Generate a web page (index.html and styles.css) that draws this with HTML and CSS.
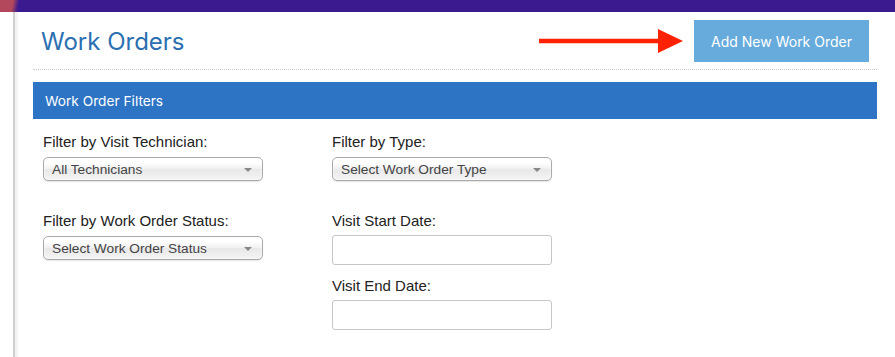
FILE: index.html
```html
<!DOCTYPE html>
<html lang="en">
<head>
  <meta charset="UTF-8" />
  <meta name="viewport" content="width=device-width, initial-scale=1.0"/>
  <title>Work Orders</title>
  <link rel="stylesheet" href="styles.css">
</head>
<body>
  <div class="topbar"></div>

  <div class="layout">
    <div class="sidebar"></div>

    <div class="main">
      <!-- Page header -->
      <div class="page-header">
        <h1 class="page-title">Work Orders</h1>
        <div class="header-actions">
          <svg class="arrow" width="145" height="26" viewBox="0 0 145 26">
            <line x1="0" y1="13" x2="121" y2="13" stroke="#ff2200" stroke-width="4.5"/>
            <polygon points="119,1 144,13 119,25" fill="#ff2200"/>
          </svg>
          <button class="btn btn-add">Add New Work Order</button>
        </div>
      </div>

      <!-- Filters -->
      <div class="panel">
        <div class="panel-heading">Work Order Filters</div>
        <div class="panel-body">
          <div class="filter-row">
            <div class="field">
              <label>Filter by Visit Technician:</label>
              <div class="select"><span>All Technicians</span><b class="caret"></b></div>
            </div>
            <div class="field">
              <label>Filter by Type:</label>
              <div class="select"><span>Select Work Order Type</span><b class="caret"></b></div>
            </div>
          </div>

          <div class="filter-row">
            <div class="field">
              <label>Filter by Work Order Status:</label>
              <div class="select"><span>Select Work Order Status</span><b class="caret"></b></div>
            </div>
            <div class="field-stack">
              <div class="field">
                <label>Visit Start Date:</label>
                <input type="text" class="date-input" />
              </div>
              <div class="field">
                <label>Visit End Date:</label>
                <input type="text" class="date-input" />
              </div>
            </div>
          </div>
        </div>
      </div>
    </div>
  </div>
</body>
</html>
```

FILE: styles.css
```css
body { margin: 0; background: #fff; font-family: "Liberation Sans", Arial, sans-serif; color: #222; }

.topbar {
  height: 12px;
  background: linear-gradient(100deg, #b3475c 0, #b3475c 13px, #3b1a8f 19px, #3b1a8f 100%);
}

.layout { display: flex; height: 345px; overflow: hidden; }
.sidebar { width: 13px; border-right: 2px solid #cfcfcf; box-shadow: 3px 0 0 #f3f3f3; }

.main { flex: 1; padding: 0 18px 0 16px; margin-left: 2px; }

.page-header {
  display: flex;
  align-items: center;
  justify-content: space-between;
  padding: 8px 8px 7px 8px;
  border-bottom: 1px dotted #c8c8c8;
}
.page-title {
  margin: 0;
  font-family: Inter, "Noto Sans", sans-serif;
  font-weight: 400;
  font-size: 24px;
  color: #2b6fb1;
}
.header-actions { display: flex; align-items: center; gap: 10px; }
.arrow { display: block; }

.btn { border: none; cursor: pointer; font-family: Inter, "Noto Sans", sans-serif; }
.btn-add {
  height: 42px;
  padding: 0 17px;
  background: #67abdc;
  color: #fff;
  font-size: 14px;
}

.panel { margin-top: 12px; }
.panel-heading {
  height: 37px;
  line-height: 38px;
  padding: 0 12px;
  background: #2d74c5;
  color: #fff;
  font-family: Inter, "Noto Sans", sans-serif;
  font-size: 13.7px;
}
.panel-body { padding: 14px 10px; }

.filter-row { display: flex; margin-bottom: 31px; }
.filter-row .field, .field-stack { width: 289px; }
.field-stack .field { margin-bottom: 12px; }

.field label { display: block; font-size: 15px; line-height: 17px; margin-bottom: 7px; }
.field-stack .field label { margin-bottom: 6px; }

.select {
  position: relative;
  box-sizing: border-box;
  width: 220px;
  height: 24px;
  line-height: 23px;
  padding: 0 8px;
  border: 1px solid #aaa;
  border-radius: 5px;
  background: linear-gradient(#ffffff 20%, #f0f0f0 50%, #e8e8e8 52%, #f4f4f4);
  box-shadow: 0 0 3px #fff inset, 0 1px 1px rgba(0,0,0,0.1);
  font-size: 13.7px;
  color: #444;
}
.caret {
  position: absolute;
  right: 10px;
  top: 10px;
  border-left: 4px solid transparent;
  border-right: 4px solid transparent;
  border-top: 4px solid #888;
}

.date-input {
  display: block;
  box-sizing: border-box;
  width: 220px;
  height: 30px;
  border: 1px solid #c6c6c6;
  border-radius: 3px;
  background: #fff;
}
```
